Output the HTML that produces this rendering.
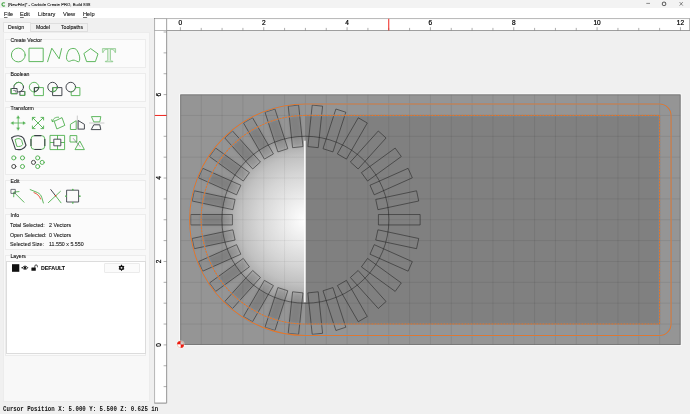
<!DOCTYPE html>
<html><head><meta charset="utf-8"><title>Carbide Create</title>
<style>
html,body{margin:0;padding:0}
#app{position:absolute;left:0;top:0;width:690px;height:414px;overflow:hidden}
body{width:690px;height:414px;overflow:hidden;position:relative;background:#f0f0f0;font-family:"Liberation Sans",sans-serif;color:#1a1a1a}
.t,svg{will-change:transform}
.t{position:absolute;white-space:pre;line-height:1.15;letter-spacing:0;-webkit-text-stroke:0.1px currentColor}
#title{position:absolute;left:0;top:0;width:690px;height:8px;background:#f3f3f3}
#menu{position:absolute;left:0;top:8px;width:690px;height:10.3px;background:#fff}
.m{top:10.6px;font-size:5.7px;color:#000;-webkit-text-stroke:0.06px #000}
#tabs{position:absolute;left:30px;top:22.8px;width:58px;height:9.2px;background:#f1f1f1;border:0.5px solid #dedede;box-sizing:border-box}
#tabsel{position:absolute;left:3px;top:22.2px;width:27.5px;height:10.4px;background:#f8f8f8;border:0.5px solid #e2e2e2;border-bottom:none;box-sizing:border-box}
#pane{position:absolute;left:3px;top:32px;width:147px;height:370px;background:#f8f8f8;border:0.5px solid #ececec;box-sizing:border-box}
.tb{top:24.7px;font-size:5.15px;color:#111}
.gb{position:absolute;left:5.4px;width:140.4px;border:0.6px solid #ececec;box-sizing:border-box;background:#fbfbfb}
.gl{left:10.3px;font-size:5.15px;color:#111;padding:0 0.5px;background:#f9f9f9;line-height:1}
.in{left:10.4px;font-size:5.3px}
.iv{left:49px;font-size:5.3px}
#list{position:absolute;left:5.8px;top:261.0px;width:140px;height:93.4px;background:#fff;border:0.6px solid #dcdcdc;box-sizing:border-box}
#lbtn{position:absolute;left:103.7px;top:263px;width:36px;height:10px;background:#fbfbfb;border:0.5px solid #ebebeb;border-radius:1px;box-sizing:border-box}
#status{left:2.7px;top:406.6px;font-family:"Liberation Mono",monospace;font-size:5.76px;font-weight:bold;color:#111;-webkit-text-stroke:0;transform:scaleY(1.12);transform-origin:0 50%}
u{text-decoration-thickness:0.4px;text-underline-offset:0.5px;text-decoration-color:rgba(0,0,0,.55)}
</style>
</head><body><div id="app">
<div id="title"></div>
<div id="menu"></div>
<svg style="position:absolute;left:0;top:0" width="12" height="9" viewBox="0 0 12 9"><path d="M4.9 3.2A1.7 1.7 0 1 0 4.9 5.6" fill="none" stroke="#3aa03a" stroke-width="1.1"/></svg>
<span class="t" style="left:8px;top:2.5px;font-size:4.25px;color:#000;-webkit-text-stroke:0.05px #000">[NewFile]* - Carbide Create PRO, Build 838</span>
<span class="t m" style="left:3.8px"><u>F</u>ile</span>
<span class="t m" style="left:20px"><u>E</u>dit</span>
<span class="t m" style="left:38px">Library</span>
<span class="t m" style="left:63px">View</span>
<span class="t m" style="left:82.8px"><u>H</u>elp</span>
<svg style="position:absolute;left:640px;top:0" width="50" height="8" viewBox="640 0 50 8"><path d="M646.3 3.4H650M679.6 2.1L682.8 5.6M682.8 2.1L679.6 5.6" stroke="#333" stroke-width="0.55" fill="none"/><rect x="662.4" y="2.2" width="3.3" height="3.3" rx="1" fill="none" stroke="#222" stroke-width="0.8"/></svg>

<div id="tabs"></div>
<div id="tabsel"></div>
<div id="pane"></div>
<span class="t tb" style="left:8px">Design</span>
<span class="t tb" style="left:35.8px">Model</span>
<span class="t tb" style="left:61.2px">Toolpaths</span>

<div class="gb" style="top:39.3px;height:28.9px"></div>
<div class="gb" style="top:73.0px;height:28.9px"></div>
<div class="gb" style="top:107.0px;height:67.8px"></div>
<div class="gb" style="top:180.0px;height:29.3px"></div>
<div class="gb" style="top:214.4px;height:35.8px"></div>
<div class="gb" style="top:254.9px;height:101.4px"></div>
<span class="t gl" style="top:38.4px">Create Vector</span>
<span class="t gl" style="top:71.9px">Boolean</span>
<span class="t gl" style="top:106.2px">Transform</span>
<span class="t gl" style="top:178.6px">Edit</span>
<span class="t gl" style="top:212.6px">Info</span>
<span class="t gl" style="top:254.4px">Layers</span>

<span class="t in" style="top:222.3px">Total Selected:</span><span class="t iv" style="top:222.3px">2 Vectors</span>
<span class="t in" style="top:231.8px">Open Selected:</span><span class="t iv" style="top:231.8px">0 Vectors</span>
<span class="t in" style="top:241.2px">Selected Size:</span><span class="t iv" style="top:241.2px">11.550 x 5.550</span>

<div id="list"></div>
<div id="lbtn"></div>
<span class="t" style="left:41.3px;top:264.6px;font-size:5.3px;font-weight:bold;color:#111">DEFAULT</span>
<span class="t" id="status">Cursor Position X: 5.000 Y: 5.500 Z: 0.625 in</span>
<svg id="icons" width="150" height="290" viewBox="0 0 150 290" style="position:absolute;left:0;top:0" fill="none" stroke-linecap="round" stroke-linejoin="round">
<g stroke="#56b356" stroke-width="0.95">
<!-- create vector -->
<circle cx="18.3" cy="55" r="6.9"/>
<rect x="29.4" y="48.2" width="13.8" height="13.4"/>
<path d="M47.6 61.7L51.8 48.2L59.2 58.8L61.6 48.6"/>
<path transform="translate(0 0.35)" d="M69 49.6C70.5 47.6 75.5 47.4 76.8 49.8C78.6 52.6 80 56 79.7 58.6C79.6 60.6 79.2 61.8 78 61.4C76.4 60.8 74.8 59.6 73 59.8C71.2 60 70.2 61.2 68.6 61C66.8 60.6 66.2 58 66.6 55.8C67 53.4 67.8 51.2 69 49.6Z"/>
<path d="M91 48.8L98 53.9L95.4 61.6H86.6L84 53.9Z"/>
<path d="M102.8 48.6H115.6V52.4H114.9C114.6 50.6 113.6 49.5 111.6 49.4H110.5V59.8C110.5 60.8 111.2 61.1 112.8 61.2V61.8H105.4V61.2C107 61.1 107.7 60.8 107.7 59.8V49.4H106.6C104.6 49.5 103.6 50.6 103.3 52.4H102.8Z" stroke-width="0.5" fill="#56b356" fill-opacity="0.18"/>
</g>
<!-- boolean -->
<g stroke-width="0.95">
<circle cx="18.7" cy="87.1" r="4.8" stroke="#3b3f47"/><path d="M14.2 85.4A4.8 4.8 0 0 1 23.2 85.4" stroke="#56b356"/>
<rect x="11.3" y="88.5" width="5.8" height="5.2" stroke="#3b3f47" fill="#fbfbfb"/><path d="M11.3 88.5V93.7H17.1" stroke="#56b356"/><path d="M13.6 90.4H15.4V92" stroke="#3b3f47" stroke-width="0.6"/>
<rect x="20.3" y="91.4" width="4.5" height="4" stroke="#3b3f47" fill="#fbfbfb"/><path d="M20.3 95.4H24.8V91.4" stroke="#56b356"/>
<circle cx="34.1" cy="87.1" r="4.8" stroke="#56b356"/><rect x="34.5" y="87.6" width="8.9" height="8" stroke="#56b356"/><path d="M34.5 91.8V87.6H38.8A4.8 4.8 0 0 1 34.5 91.8Z" stroke="#3b3f47"/>
<circle cx="52.6" cy="87.1" r="4.8" stroke="#3b3f47"/><rect x="53" y="87.6" width="8.9" height="8" stroke="#3b3f47"/><path d="M53 91.8V87.6H57.3A4.8 4.8 0 0 1 53 91.8Z" stroke="#56b356"/>
<circle cx="70.8" cy="87.1" r="4.8" stroke="#3b3f47"/><path d="M75.5 87.6H79.9V95.6H71.2V91.9" stroke="#56b356"/><path d="M75.5 87.6A4.8 4.8 0 0 1 71.2 91.9" stroke="#56b356" stroke-opacity="0.6"/>
</g>
<!-- transform row1 -->
<g stroke="#56b356" stroke-width="0.95">
<path d="M18.2 117V129M12 123H24.4" stroke-width="0.85"/><path d="M18.2 115.8L19.7 118.2H16.7ZM18.2 130.2L19.7 127.8H16.7ZM11 123L13.4 121.5V124.5ZM25.4 123L23 121.5V124.5Z" fill="#56b356" stroke-width="0.3"/>
<path d="M32.6 117.6L43.4 128.4M43.4 117.6L32.6 128.4M32.4 120V117.4H35M41 117.4H43.6V120M32.4 126V128.6H35M41 128.6H43.6V126"/>
<path d="M54.6 121.2L62 117.6L64.8 125.4L57.2 128.8Z"/><path d="M52.4 121.6C52.6 118.6 55.8 116.8 58.6 117.2M52.4 121.6L51.6 119.8M52.4 121.6L54.2 120.8"/>
<path d="M70.4 129.1V124.3L76.2 120.7V129.1Z"/><path d="M78.5 120.7L84.4 124.3V129.1H78.5Z" stroke="#3b3f47"/><path d="M77.3 116V129.6" stroke="#9a9a9a" stroke-width="0.5"/>
<path d="M91.8 116.6H100.8L99.8 121.9H94.2Z"/><path d="M94.2 124.8H99.8L100.8 129.6H91.6Z" stroke="#3b3f47"/><path d="M89.6 123H104" stroke="#9a9a9a" stroke-width="0.5"/>
</g>
<!-- transform row2 -->
<g stroke-width="0.95">
<path d="M11.6 137.8C15.4 134.8 21.6 135.2 23.6 138.2L26 145.2C24.6 149.2 19.6 150.4 15.4 149.2Z" stroke="#3b3f47" stroke-width="1.1"/><path d="M15.4 139.4C17.8 138 20.6 138.4 21.6 140.2L22.8 144.4C21.8 146.4 19.4 146.8 17.2 146.4Z" stroke="#56b356"/>
<rect x="31" y="135.6" width="13.8" height="13.8" rx="3.4" stroke="#56b356" stroke-width="0.95"/><path d="M34.4 135.6H41.4M34.4 149.4H41.4M31 139V146M44.8 139V146" stroke="#3b3f47" stroke-width="1.05" stroke-linecap="butt"/>
<rect x="50.4" y="135.4" width="14.2" height="14.2" stroke="#56b356"/><path d="M57.5 135.4V149.6M50.4 142.5H64.6" stroke="#56b356"/><rect x="54.2" y="139.2" width="6.6" height="6.6" fill="#fbfbfb" stroke="#3b3f47" stroke-width="0.9"/>
<rect x="70.4" y="135.6" width="6.4" height="6.4" stroke="#56b356"/><path d="M80 141.4L84.4 149.6H75.4Z" stroke="#56b356"/><path d="M73.4 138.6L80 146.4" stroke="#3b3f47" stroke-width="0.5" stroke-dasharray="0.8 0.8"/>
</g>
<!-- transform row3 -->
<g stroke="#56b356" stroke-width="1">
<circle cx="13.8" cy="157.9" r="2.05"/><circle cx="22.5" cy="157.9" r="2.05"/><circle cx="22.5" cy="166.5" r="2.05"/><circle cx="13.8" cy="166.5" r="2.05" stroke="#4a4a4a"/>
<circle cx="37.7" cy="157.9" r="2.05"/><circle cx="42.2" cy="162.4" r="2.05"/><circle cx="37.7" cy="166.5" r="2.05"/><circle cx="33.5" cy="162.4" r="2.05" stroke="#4a4a4a"/>
</g>
<!-- edit -->
<g stroke-width="0.95">
<path d="M14 192.2L24 202.2" stroke="#56b356"/><path d="M13.7 196.8L13.9 192.1L19 191.6" stroke="#56b356"/><rect x="11.3" y="189.4" width="4" height="4" stroke="#3b3f47" stroke-width="0.7"/>
<path d="M30.2 189.6L37.6 192.6C40 193.8 41 195.2 41.8 197.6L43.4 203" stroke="#56b356"/><path d="M34 192.6C37.4 193.8 39.6 196 40.6 199" stroke="#e8452c" stroke-width="0.9"/>
<path d="M48.4 202.6L60.4 191.4" stroke="#56b356"/><path d="M55.6 195.8L61 202.8" stroke="#56b356"/><path d="M50.8 189.6L55.6 195.8" stroke="#3b3f47"/><circle cx="55.6" cy="195.8" r="0.7" fill="#e8261c" stroke="none"/>
<rect x="67" y="190.2" width="11.6" height="11.8" stroke="#3b3f47" stroke-width="0.9"/><g fill="#56b356" stroke="none"><circle cx="72.8" cy="189.6" r="0.9"/><circle cx="72.8" cy="202.8" r="0.9"/><circle cx="66" cy="196.2" r="0.9"/><circle cx="79.8" cy="196.2" r="0.9"/></g>
</g>
<!-- layer row -->
<rect x="12" y="264.2" width="7.3" height="7.6" fill="#111" stroke="none"/>
<path d="M22.2 267.8C23.6 265.6 26.4 265.6 27.8 267.8C26.4 269.8 23.6 269.8 22.2 267.8Z" stroke="#111" stroke-width="0.9" fill="none"/><circle cx="25" cy="267.7" r="1.25" fill="#111" stroke="none"/>
<rect x="31.4" y="267.4" width="4.4" height="3.4" rx="0.5" fill="#111" stroke="none"/><path d="M34.8 267.4V266.2A1.3 1.3 0 0 1 37.4 266.2V266.9" stroke="#111" stroke-width="0.75" fill="none"/>
<g transform="translate(121.5 267.8)"><circle r="1.75" fill="none" stroke="#111" stroke-width="1.3"/><path d="M0 -3V3M-2.6 -1.5L2.6 1.5M-2.6 1.5L2.6 -1.5" stroke="#111" stroke-width="1.1" stroke-linecap="butt"/><circle r="0.9" fill="#fbfbfb" stroke="none"/></g>
</svg>
<svg width="690" height="414" viewBox="0 0 690 414" style="position:absolute;left:0;top:0" font-family="Liberation Sans, sans-serif" font-size="6.5" fill="#000" stroke="#000" stroke-width="0.22">
<rect x="154.5" y="18.5" width="536" height="12" fill="#fff"/>
<rect x="154.5" y="18.5" width="12.2" height="384.5" fill="#fff"/>
<path d="M690 18.6H154.6V403.2" fill="none" stroke="#b8b8b8" stroke-width="0.7"/>
<path d="M154.6 403.2H166.7V30.5H690M689.6 18.6V30.5" fill="none" stroke="#8e8e8e" stroke-width="0.7"/>
<path d="M166.7 18.6V30.5M154.6 30.5H166.7" fill="none" stroke="#9a9a9a" stroke-width="0.7"/>
<path d="M180.40 27.2V30.5M201.24 27.9V30.5M222.07 27.9V30.5M242.91 27.9V30.5M263.74 27.2V30.5M284.58 27.9V30.5M305.41 27.9V30.5M326.25 27.9V30.5M347.08 27.2V30.5M367.92 27.9V30.5M388.75 27.9V30.5M409.59 27.9V30.5M430.42 27.2V30.5M451.25 27.9V30.5M472.09 27.9V30.5M492.93 27.9V30.5M513.76 27.2V30.5M534.60 27.9V30.5M555.43 27.9V30.5M576.26 27.9V30.5M597.10 27.2V30.5M617.94 27.9V30.5M638.77 27.9V30.5M659.61 27.9V30.5M680.44 27.2V30.5M163.6 386.62H166.7M163.6 365.76H166.7M163.6 344.90H166.7M163.6 324.04H166.7M163.6 303.18H166.7M163.6 282.32H166.7M163.6 261.46H166.7M163.6 240.60H166.7M163.6 219.74H166.7M163.6 198.88H166.7M163.6 178.02H166.7M163.6 157.16H166.7M163.6 136.30H166.7M163.6 115.44H166.7M163.6 94.58H166.7M163.6 73.72H166.7M163.6 52.86H166.7M163.6 32.00H166.7" stroke="#777" stroke-linecap="butt" stroke-width="0.6" fill="none"/>
<text x="180.40" y="25.2" text-anchor="middle" stroke-width="0.22">0</text>
<text x="263.74" y="25.2" text-anchor="middle" stroke-width="0.22">2</text>
<text x="347.08" y="25.2" text-anchor="middle" stroke-width="0.22">4</text>
<text x="430.42" y="25.2" text-anchor="middle" stroke-width="0.22">6</text>
<text x="513.76" y="25.2" text-anchor="middle" stroke-width="0.22">8</text>
<text x="597.10" y="25.2" text-anchor="middle" stroke-width="0.22">10</text>
<text x="680.44" y="25.2" text-anchor="middle" stroke-width="0.22">12</text>
<text transform="translate(161.3 344.90) rotate(-90)" text-anchor="middle">0</text>
<text transform="translate(161.3 261.46) rotate(-90)" text-anchor="middle">2</text>
<text transform="translate(161.3 178.02) rotate(-90)" text-anchor="middle">4</text>
<text transform="translate(161.3 94.58) rotate(-90)" text-anchor="middle">6</text>
<path d="M388.75 18.8V30.4M154.9 115.44H166.5" stroke="#f0231c" stroke-width="1"/>
</svg><svg id="cv" width="690" height="414" viewBox="0 0 690 414" style="position:absolute;left:0;top:0">
<defs>
<radialGradient id="dome" gradientUnits="userSpaceOnUse" cx="305.41" cy="219.74" r="83.5">
<stop offset="0" stop-color="#ffffff"/><stop offset="0.14" stop-color="#f5f5f5"/><stop offset="0.35" stop-color="#e5e5e5"/><stop offset="0.56" stop-color="#d5d5d5"/><stop offset="0.77" stop-color="#c1c1c1"/><stop offset="0.87" stop-color="#b2b2b2"/><stop offset="0.95" stop-color="#a5a5a5"/><stop offset="1" stop-color="#999999"/>
</radialGradient>
<filter id="bl2" filterUnits="userSpaceOnUse" x="295" y="130" width="20" height="180"><feGaussianBlur stdDeviation="0.35"/></filter>
<filter id="bl" x="-20%" y="-20%" width="140%" height="140%"><feGaussianBlur stdDeviation="1.4"/></filter>
<clipPath id="lefthalf"><rect x="0" y="0" width="305.41" height="414"/></clipPath>
<clipPath id="stockclip"><rect x="180.40" y="94.58" width="500.04" height="250.32"/></clipPath>
</defs>
<rect x="179.50" y="93.68" width="501.84" height="252.12" fill="#ffffff"/>
<rect x="180.40" y="94.58" width="500.04" height="250.32" fill="#959595"/>
<rect x="305.41" y="115.44" width="354.19" height="208.60" fill="#808080"/>
<g clip-path="url(#lefthalf)"><circle cx="305.41" cy="219.74" r="83.5" fill="url(#dome)"/></g>
<path d="M201.24 94.58V344.90M222.07 94.58V344.90M242.91 94.58V344.90M263.74 94.58V344.90M284.58 94.58V344.90M305.41 94.58V344.90M326.25 94.58V344.90M347.08 94.58V344.90M367.92 94.58V344.90M388.75 94.58V344.90M409.59 94.58V344.90M430.42 94.58V344.90M451.25 94.58V344.90M472.09 94.58V344.90M492.93 94.58V344.90M513.76 94.58V344.90M534.60 94.58V344.90M555.43 94.58V344.90M576.26 94.58V344.90M597.10 94.58V344.90M617.94 94.58V344.90M638.77 94.58V344.90M659.61 94.58V344.90M180.40 324.04H680.44M180.40 303.18H680.44M180.40 282.32H680.44M180.40 261.46H680.44M180.40 240.60H680.44M180.40 219.74H680.44M180.40 198.88H680.44M180.40 178.02H680.44M180.40 157.16H680.44M180.40 136.30H680.44M180.40 115.44H680.44" stroke="#000" stroke-opacity="0.11" stroke-width="0.7" fill="none"/>
<g clip-path="url(#lefthalf)"><circle cx="305.41" cy="219.74" r="83.5" fill="url(#dome)" fill-opacity="0.3"/></g>
<g filter="url(#bl)"><polygon points="292.59,147.68 288.23,106.18 298.60,105.09 302.96,146.58" fill="#000" fill-opacity="0.045"/><polygon points="291.50,137.24 289.31,116.46 299.68,115.37 301.87,136.15" fill="#000" fill-opacity="0.105"/><polygon points="293.11,146.82 292.09,137.18 301.27,136.22 302.28,145.85" fill="#000" fill-opacity="0.07"/><polygon points="277.89,151.91 265.00,112.24 274.92,109.01 287.81,148.69" fill="#000" fill-opacity="0.045"/><polygon points="274.65,141.94 268.19,122.06 278.11,118.84 284.57,138.72" fill="#000" fill-opacity="0.105"/><polygon points="278.21,150.97 275.22,141.75 284.00,138.90 286.99,148.12" fill="#000" fill-opacity="0.07"/><polygon points="264.39,159.12 243.53,122.99 252.56,117.77 273.42,153.90" fill="#000" fill-opacity="0.045"/><polygon points="259.14,150.03 248.69,131.93 257.73,126.72 268.18,144.82" fill="#000" fill-opacity="0.105"/><polygon points="264.51,158.13 259.66,149.73 267.66,145.12 272.50,153.51" fill="#000" fill-opacity="0.07"/><polygon points="252.68,168.97 224.77,137.97 232.52,130.99 260.43,161.99" fill="#000" fill-opacity="0.045"/><polygon points="245.66,161.18 231.68,145.65 239.43,138.67 253.41,154.20" fill="#000" fill-opacity="0.105"/><polygon points="252.59,167.98 246.11,160.78 252.97,154.60 259.45,161.80" fill="#000" fill-opacity="0.07"/><polygon points="243.28,181.04 209.53,156.52 215.66,148.08 249.41,172.61" fill="#000" fill-opacity="0.045"/><polygon points="234.79,174.88 217.88,162.59 224.01,154.16 240.92,166.44" fill="#000" fill-opacity="0.105"/><polygon points="242.98,180.09 235.14,174.39 240.57,166.93 248.41,172.62" fill="#000" fill-opacity="0.07"/><polygon points="236.59,194.81 198.48,177.84 202.72,168.31 240.83,185.28" fill="#000" fill-opacity="0.045"/><polygon points="227.01,190.54 207.91,182.04 212.16,172.51 231.25,181.01" fill="#000" fill-opacity="0.105"/><polygon points="236.10,193.93 227.25,189.99 231.01,181.56 239.86,185.50" fill="#000" fill-opacity="0.07"/><polygon points="232.91,209.66 192.10,200.99 194.27,190.79 235.08,199.46" fill="#000" fill-opacity="0.045"/><polygon points="222.65,207.48 202.21,203.14 204.38,192.93 224.82,197.28" fill="#000" fill-opacity="0.105"/><polygon points="232.25,208.91 222.78,206.89 224.69,197.87 234.17,199.88" fill="#000" fill-opacity="0.07"/><polygon points="232.40,224.95 190.68,224.95 190.68,214.52 232.40,214.52" fill="#000" fill-opacity="0.045"/><polygon points="221.91,224.95 201.01,224.95 201.01,214.52 221.91,214.52" fill="#000" fill-opacity="0.105"/><polygon points="231.60,224.35 221.91,224.35 221.91,215.12 231.60,215.12" fill="#000" fill-opacity="0.07"/><polygon points="235.08,240.02 194.27,248.69 192.10,238.49 232.91,229.82" fill="#000" fill-opacity="0.045"/><polygon points="224.82,242.20 204.38,246.55 202.21,236.34 222.65,232.00" fill="#000" fill-opacity="0.105"/><polygon points="234.17,239.60 224.69,241.61 222.78,232.59 232.25,230.57" fill="#000" fill-opacity="0.07"/><polygon points="240.83,254.20 202.72,271.17 198.48,261.64 236.59,244.67" fill="#000" fill-opacity="0.045"/><polygon points="231.25,258.47 212.16,266.97 207.91,257.44 227.01,248.94" fill="#000" fill-opacity="0.105"/><polygon points="239.86,253.98 231.01,257.92 227.25,249.49 236.10,245.55" fill="#000" fill-opacity="0.07"/><polygon points="249.41,266.87 215.66,291.40 209.53,282.96 243.28,258.44" fill="#000" fill-opacity="0.045"/><polygon points="240.92,273.04 224.01,285.32 217.88,276.89 234.79,264.60" fill="#000" fill-opacity="0.105"/><polygon points="248.41,266.86 240.57,272.55 235.14,265.09 242.98,259.39" fill="#000" fill-opacity="0.07"/><polygon points="260.43,277.49 232.52,308.49 224.77,301.51 252.68,270.51" fill="#000" fill-opacity="0.045"/><polygon points="253.41,285.28 239.43,300.81 231.68,293.83 245.66,278.30" fill="#000" fill-opacity="0.105"/><polygon points="259.45,277.68 252.97,284.88 246.11,278.70 252.59,271.50" fill="#000" fill-opacity="0.07"/><polygon points="273.42,285.58 252.56,321.71 243.53,316.49 264.39,280.36" fill="#000" fill-opacity="0.045"/><polygon points="268.18,294.66 257.73,312.76 248.69,307.55 259.14,289.45" fill="#000" fill-opacity="0.105"/><polygon points="272.50,285.97 267.66,294.36 259.66,289.75 264.51,281.35" fill="#000" fill-opacity="0.07"/><polygon points="287.81,290.79 274.92,330.47 265.00,327.24 277.89,287.57" fill="#000" fill-opacity="0.045"/><polygon points="284.57,300.76 278.11,320.64 268.19,317.42 274.65,297.54" fill="#000" fill-opacity="0.105"/><polygon points="286.99,291.36 284.00,300.58 275.22,297.73 278.21,288.51" fill="#000" fill-opacity="0.07"/><polygon points="302.96,292.90 298.60,334.39 288.23,333.30 292.59,291.80" fill="#000" fill-opacity="0.045"/><polygon points="301.87,303.33 299.68,324.11 289.31,323.02 291.50,302.24" fill="#000" fill-opacity="0.105"/><polygon points="302.28,293.63 301.27,303.26 292.09,302.30 293.11,292.66" fill="#000" fill-opacity="0.07"/></g>
<rect x="180.70" y="94.88" width="499.44" height="249.72" fill="none" stroke="#737373" stroke-width="0.9"/>
<rect x="304.11" y="140.74" width="1.5" height="161.50" fill="#fff" fill-opacity="0.95" filter="url(#bl2)"/>
<path d="M305.41 115.44H659.61V324.04H305.41" fill="none" stroke="#5a5a5a" stroke-width="0.6" stroke-opacity="0.6"/>
<path d="M378.42 214.52L420.14 214.52L420.14 224.95L378.42 224.95ZM375.74 199.46L416.55 190.79L418.72 200.99L377.91 209.66ZM369.99 185.28L408.10 168.31L412.34 177.84L374.23 194.81ZM361.41 172.61L395.16 148.08L401.29 156.52L367.54 181.04ZM350.39 161.99L378.30 130.99L386.05 137.97L358.14 168.97ZM337.40 153.90L358.26 117.77L367.29 122.99L346.43 159.12ZM323.01 148.69L335.90 109.01L345.82 112.24L332.93 151.91ZM307.86 146.58L312.22 105.09L322.59 106.18L318.23 147.68ZM292.59 147.68L288.23 106.18L298.60 105.09L302.96 146.58ZM277.89 151.91L265.00 112.24L274.92 109.01L287.81 148.69ZM264.39 159.12L243.53 122.99L252.56 117.77L273.42 153.90ZM252.68 168.97L224.77 137.97L232.52 130.99L260.43 161.99ZM243.28 181.04L209.53 156.52L215.66 148.08L249.41 172.61ZM236.59 194.81L198.48 177.84L202.72 168.31L240.83 185.28ZM232.91 209.66L192.10 200.99L194.27 190.79L235.08 199.46ZM232.40 224.95L190.68 224.95L190.68 214.52L232.40 214.52ZM235.08 240.02L194.27 248.69L192.10 238.49L232.91 229.82ZM240.83 254.20L202.72 271.17L198.48 261.64L236.59 244.67ZM249.41 266.87L215.66 291.40L209.53 282.96L243.28 258.44ZM260.43 277.49L232.52 308.49L224.77 301.51L252.68 270.51ZM273.42 285.58L252.56 321.71L243.53 316.49L264.39 280.36ZM287.81 290.79L274.92 330.47L265.00 327.24L277.89 287.57ZM302.96 292.90L298.60 334.39L288.23 333.30L292.59 291.80ZM318.23 291.80L322.59 333.30L312.22 334.39L307.86 292.90ZM332.93 287.57L345.82 327.24L335.90 330.47L323.01 290.79ZM346.43 280.36L367.29 316.49L358.26 321.71L337.40 285.58ZM358.14 270.51L386.05 301.51L378.30 308.49L350.39 277.49ZM367.54 258.44L401.29 282.96L395.16 291.40L361.41 266.87ZM374.23 244.67L412.34 261.64L408.10 271.17L369.99 254.20ZM377.91 229.82L418.72 238.49L416.55 248.69L375.74 240.02Z" fill="none" stroke="#262626" stroke-width="0.65" stroke-opacity="0.9"/>
<circle cx="305.41" cy="219.74" r="83.5" fill="none" stroke="#222" stroke-width="0.6" stroke-opacity="0.9"/>
<path d="M305.41 103.97H659.59A11.47 11.47 0 0 1 671.06 115.44V324.04A11.47 11.47 0 0 1 659.59 335.51H305.41A115.77 115.77 0 0 1 305.41 103.97Z" fill="none" stroke="#5f9fd6" stroke-opacity="0.28" stroke-width="2.8"/>
<path d="M305.41 103.97H659.59A11.47 11.47 0 0 1 671.06 115.44V324.04A11.47 11.47 0 0 1 659.59 335.51H305.41A115.77 115.77 0 0 1 305.41 103.97Z" fill="none" stroke="#e0782e" stroke-width="1.1"/>
<path d="M305.41 115.44H659.61V324.04H305.41A104.30 104.30 0 0 1 305.41 115.44Z" fill="none" stroke="#5f9fd6" stroke-opacity="0.25" stroke-width="2.8"/>
<path d="M305.41 115.44H659.61V324.04H305.41A104.30 104.30 0 0 1 305.41 115.44Z" fill="none" stroke="#e0782e" stroke-width="0.5" stroke-opacity="0.7"/>
<path d="M305.41 115.44H659.61V324.04H305.41A104.30 104.30 0 0 1 305.41 115.44Z" fill="none" stroke="#e0782e" stroke-width="1.15" stroke-dasharray="2 1"/>
<g transform="translate(180.50 344.40)"><circle r="4" fill="#fff" fill-opacity="0.55"/><path d="M0 0V-3.5A3.5 3.5 0 0 0 -3.5 0Z" fill="#f0140e"/><path d="M0 0V3.5A3.5 3.5 0 0 0 3.5 0Z" fill="#f0140e"/><path d="M0 0H-3.5A3.5 3.5 0 0 0 0 3.5Z" fill="#fff" fill-opacity="0.8"/><circle r="3.3" fill="none" stroke="#d8653a" stroke-width="0.4" stroke-opacity="0.8"/></g>
</svg>
</div></body></html>
